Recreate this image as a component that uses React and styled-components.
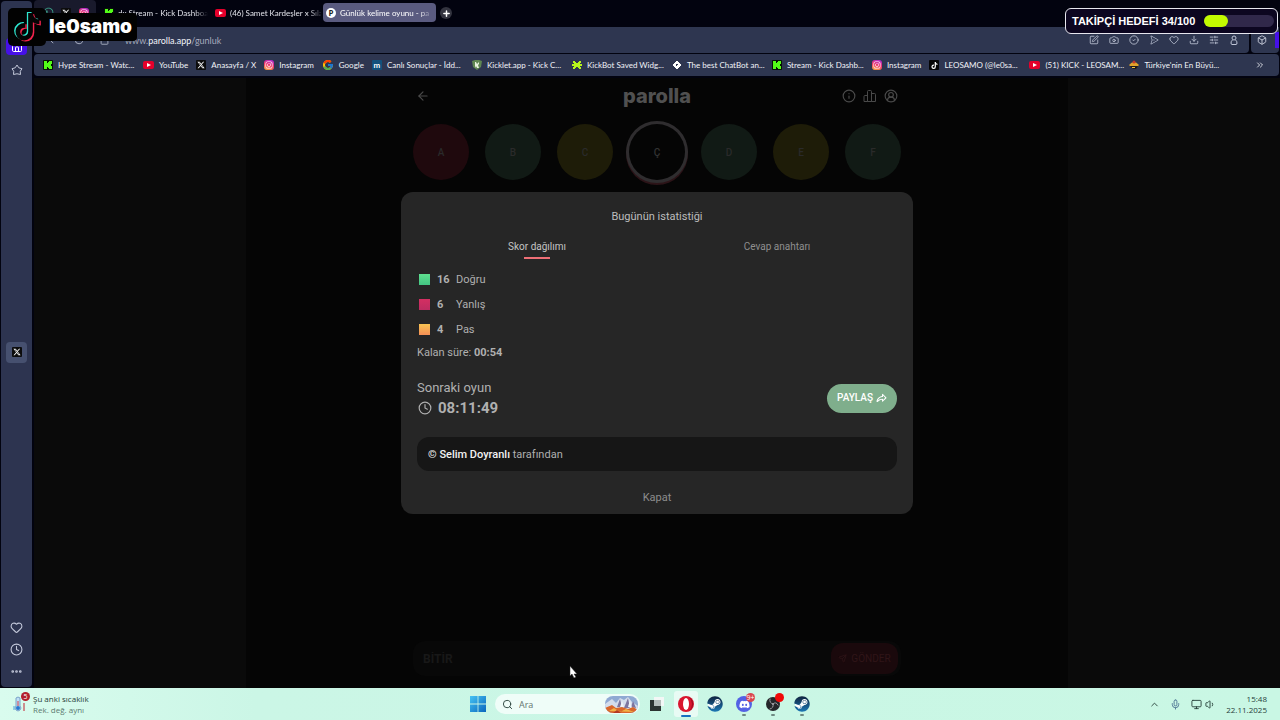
import React, { useState } from 'react';
import styled, { createGlobalStyle, css } from 'styled-components';
import {
  ArrowLeft,
  Box,
  Camera,
  ChevronUp,
  ChevronsRight,
  CircleCheck,
  CircleUserRound,
  Clock,
  Download,
  Ellipsis,
  Heart,
  House,
  Info,
  Lock,
  Mic,
  Monitor,
  Plus,
  RotateCw,
  Search,
  Send,
  SlidersHorizontal,
  SquarePen,
  Volume1,
} from 'lucide-react';
import { FaDiscord, FaInstagram, FaSteam, FaTiktok, FaWhatsapp, FaXTwitter } from 'react-icons/fa6';
import { FcGoogle } from 'react-icons/fc';
import { PiPaperPlaneRight, PiShareFatBold } from 'react-icons/pi';

const uiFont = 'Lato, "Noto Sans", sans-serif';
const taskbarFont = '"Open Sans", "Noto Sans", sans-serif';
const gameFont = 'Roboto, "Noto Sans", sans-serif';

const GlobalStyle = createGlobalStyle`
  * {
    box-sizing: border-box;
  }
  body {
    margin: 0;
    background: #02030f;
    font-family: ${uiFont};
    overflow: hidden;
  }
  button, input {
    font: inherit;
    color: inherit;
    border: 0;
    padding: 0;
    background: none;
  }
  a {
    color: inherit;
    text-decoration: none;
  }
  svg {
    display: block;
    flex-shrink: 0;
  }
`;

const Desktop = styled.div`
  position: relative;
  height: 100vh;
  display: flex;
  flex-direction: column;
`;

const Browser = styled.div`
  flex: 1;
  min-height: 0;
  display: flex;
  gap: 2px;
  padding-left: 1px;
`;

const Sidebar = styled.aside`
  width: 31px;
  margin: 1px 0;
  padding: 25px 0 9px;
  border-radius: 4px;
  background: #2d3450;
  color: #c3c8da;
  display: grid;
  grid-template-rows: 1fr auto 1fr;
  justify-items: center;
`;

const SidebarGroup = styled.div`
  display: flex;
  flex-direction: column;
  align-items: center;
  gap: 8px;
  ${(p) => (p.$end ? css`justify-content: flex-end;` : css`padding-top: 12px;`)}
`;

const SidebarButton = styled.button`
  display: grid;
  place-items: center;
  width: 21px;
  height: ${(p) => (p.$tall ? 21 : 14)}px;
  border-radius: 4px;
  ${(p) => p.$active && css`
    height: 17px;
    background: #4610e8;
    color: #fff;
  `}
  ${(p) => p.$tall && css`background: #46506f;`}
`;

const Main = styled.div`
  flex: 1;
  min-width: 0;
  display: flex;
  flex-direction: column;
`;

const TabStrip = styled.nav`
  height: 27px;
  display: flex;
  align-items: flex-start;
  gap: 2px;
`;

const PinnedTabs = styled.div`
  display: flex;
  align-items: center;
  justify-content: space-around;
  width: 62px;
  height: 25px;
  margin-right: 3px;
  padding: 0 3px 0 5px;
  border-radius: 4px;
  background: #191a2c;
`;

const Tab = styled.button`
  display: flex;
  align-items: center;
  gap: 4px;
  width: ${(p) => (p.$active ? 113 : 109)}px;
  height: 19px;
  margin-top: 3px;
  padding: 0 3px;
  border-radius: 4px;
  overflow: hidden;
  font-size: 8px;
  color: #e2e3ea;
  ${(p) => p.$active && css`
    background: #5a5b80;
    color: #fff;
  `}
`;

const TabTitle = styled.span`
  flex: 1;
  text-align: left;
  white-space: nowrap;
  mask-image: linear-gradient(90deg, #000 85%, transparent);
`;

const ParollaMark = styled.span`
  display: grid;
  place-items: center;
  flex-shrink: 0;
  width: 10px;
  height: 10px;
  border-radius: 50%;
  background: #fff;
  color: #222;
  font-size: 7px;
  font-weight: 800;
`;

const NewTab = styled.button`
  display: grid;
  place-items: center;
  width: 12px;
  height: 12px;
  margin: 7px 0 0 2px;
  border-radius: 50%;
  background: #33343f;
  color: #fff;
`;

const AddressRow = styled.div`
  display: flex;
  gap: 2px;
  height: 26px;
  padding-right: 1px;
`;

const AddressBar = styled.div`
  flex: 1;
  display: flex;
  align-items: center;
  gap: 16px;
  padding: 0 10px 0 14px;
  border-radius: 0 0 4px 4px;
  background: #2e3650;
  color: #bfc5d6;
`;

const Address = styled.span`
  flex: 1;
  font-size: 9px;
  color: #a5abbd;

  b {
    font-weight: 400;
    color: #f2f3f8;
  }
`;

const ToolButtons = styled.div`
  display: flex;
  gap: 10px;
`;

const IconButton = styled.button`
  display: grid;
  place-items: center;
  min-width: 10px;
`;

const ExtensionPanel = styled.div`
  display: flex;
  align-items: center;
  justify-content: space-between;
  width: 28px;
  padding-left: 6px;
  border-radius: 0 0 4px 4px;
  background: #2e3650;
  color: #d5d9e6;

  &::after {
    content: '';
    width: 4px;
    height: 16px;
    background: #4610e8;
  }
`;

const Bookmarks = styled.nav`
  display: flex;
  align-items: center;
  gap: 8px;
  height: 22px;
  margin: 1px 1px 2px 0;
  padding: 0 14px 0 9px;
  border-radius: 4px;
  background: #2e3650;
  color: #f2f3f8;
`;

const BookmarkLink = styled.a`
  display: flex;
  align-items: center;
  gap: 5px;
  flex-shrink: 0;
  font-size: 8px;
  line-height: 12px;
  white-space: nowrap;
  ${(p) => p.$long && css`width: 92px;`}
`;

const MoreButton = styled(IconButton)`
  margin-left: auto;
`;

const LogoTile = styled.span`
  display: grid;
  place-items: center;
  flex-shrink: 0;
  width: 10px;
  height: 10px;
  border-radius: ${(p) => (p.$round ? '3px' : '1px')};
  background: ${(p) => p.$bg};
  color: #fff;
  font-size: 8px;
  font-weight: 700;
  line-height: 10px;
`;

const Page = styled.main`
  position: relative;
  flex: 1;
  min-height: 0;
  display: flex;
  justify-content: center;
  background: #0a0a0a;
  font-family: ${gameFont};
`;

const GameArea = styled.div`
  display: flex;
  justify-content: center;
  width: 66%;
  background: #050505;
`;

const Game = styled.div`
  display: flex;
  flex-direction: column;
  width: 512px;
  padding: 6px 12px 12px;
`;

const GameHeader = styled.header`
  display: grid;
  grid-template-columns: 1fr auto 1fr;
  align-items: center;
  height: 24px;
  padding: 0 3px;
  color: #4a4a4a;
`;

const GameTitle = styled.h1`
  margin: 0;
  font-family: Inter, sans-serif;
  font-size: 20px;
  line-height: 20px;
  font-weight: 800;
  color: #505050;
`;

const HeaderActions = styled.div`
  display: flex;
  justify-content: flex-end;
  gap: 7px;
`;

const BackButton = styled(IconButton)`
  justify-self: start;
`;

const Letters = styled.div`
  display: flex;
  justify-content: space-between;
  margin-top: 16px;
`;

const letterColors = {
  wrong: '#1f090d',
  right: '#111a15',
  pass: '#1e1c08',
  current: '#050505',
};

const Letter = styled.span`
  display: grid;
  place-items: center;
  width: 56px;
  height: 56px;
  border-radius: 50%;
  background: ${(p) => letterColors[p.$state]};
  color: ${(p) => (p.$state === 'current' ? '#333' : '#2a2a2a')};
  font-size: 10px;
  font-weight: 500;
  ${(p) => p.$state === 'current' && css`
    box-shadow: 0 0 0 3px #2f2d2f, 0 2px 0 3px #2c1418;
  `}
`;

const AnswerBar = styled.form`
  display: flex;
  align-items: center;
  height: 35px;
  margin-top: auto;
  border-radius: 12px;
  background: #080808;
`;

const AnswerInput = styled.input`
  flex: 1;
  min-width: 0;
  padding: 0 10px;
  font-size: 12px;
  font-weight: 700;
  color: #181818;
  outline: none;
`;

const SendButton = styled.button`
  display: flex;
  align-items: center;
  justify-content: center;
  gap: 4px;
  width: 67px;
  height: 31px;
  margin-right: 3px;
  border-radius: 12px;
  background: #1a090c;
  color: #301518;
  font-size: 10px;
`;

const Overlay = styled.div`
  position: absolute;
  inset: 0;
  display: flex;
  justify-content: center;
  align-items: flex-start;
  padding-top: 114px;
`;

const Modal = styled.section`
  display: flex;
  flex-direction: column;
  width: 512px;
  padding: 17px 16px 4px;
  border-radius: 12px;
  background: #262626;
  color: #b0b0b0;
  font-size: 11px;
  line-height: 16px;
`;

const ModalTitle = styled.h2`
  margin: 0;
  text-align: center;
  font-size: 11px;
  font-weight: 400;
  color: #bdbdbd;
`;

const ModalTabs = styled.div`
  display: grid;
  grid-template-columns: 1fr 1fr;
  margin-top: 14px;
`;

const ModalTab = styled.button`
  display: flex;
  flex-direction: column;
  align-items: center;
  gap: 2px;
  height: 22px;
  font-size: 10px;
  color: ${(p) => (p.$active ? '#c4c4c4' : '#8f8f8f')};

  &::after {
    content: '';
    width: 26px;
    height: 2px;
    background: ${(p) => (p.$active ? '#ee6f76' : 'transparent')};
  }
`;

const ScoreList = styled.ul`
  margin: 6px 0 3px;
  padding: 0 0 0 2px;
  list-style: none;
`;

const ScoreRow = styled.li`
  display: grid;
  grid-template-columns: 18px 19px auto;
  align-items: center;
  height: 25px;

  &::before {
    content: '';
    width: 11px;
    height: 11px;
    background: ${(p) => p.$fill};
  }
`;

const NextGame = styled.div`
  display: flex;
  align-items: center;
  justify-content: space-between;
  margin-top: 19px;
`;

const NextLabel = styled.div`
  font-size: 13px;
`;

const Countdown = styled.div`
  display: flex;
  align-items: center;
  gap: 6px;
  margin-top: 4px;
  padding-left: 1px;
  font-size: 15px;
  font-weight: 700;
`;

const ShareButton = styled.button`
  display: flex;
  align-items: center;
  justify-content: center;
  gap: 3px;
  width: 70px;
  height: 29px;
  border-radius: 15px;
  background: #7fae8c;
  color: #fff;
  font-size: 10px;
  font-weight: 500;
`;

const Credit = styled.p`
  margin: 21px 0 14px;
  padding: 10px 11px 8px;
  border-radius: 12px;
  background: #161616;

  a {
    color: #f2f2f2;
    font-weight: 500;
  }
`;

const CloseButton = styled.button`
  height: 25px;
  color: #8d8d8d;
`;

const Taskbar = styled.footer`
  display: grid;
  grid-template-columns: 1fr auto 1fr;
  align-items: center;
  height: 32px;
  padding: 0 13px;
  background: linear-gradient(90deg, #d9fcee, #cbf6e6 20%, #c9f7e4);
  color: #27413a;
  font-family: ${taskbarFont};
`;

const Weather = styled.div`
  position: relative;
  display: flex;
  align-items: center;
  gap: 5px;
  font-size: 8px;
  line-height: 11px;

  small {
    display: block;
    font-size: 8px;
    color: #5c7a70;
  }
`;

const TaskCenter = styled.div`
  display: flex;
  align-items: center;
  gap: 5px;
`;

const StartButton = styled(IconButton)`
  padding: 0 4px;
`;

const SearchBox = styled.label`
  display: flex;
  align-items: center;
  gap: 6px;
  width: 145px;
  height: 20px;
  padding: 0 2px 0 7px;
  border-radius: 10px;
  background: #effdf8;
  font-size: 9px;

  input {
    flex: 1;
    min-width: 0;
    outline: none;
  }
  input::placeholder {
    color: #64756f;
    opacity: 1;
  }
`;

const Apps = styled.div`
  display: flex;
  gap: 5px;
`;

const AppButton = styled.button`
  position: relative;
  display: grid;
  place-items: center;
  width: 24px;
  height: 26px;
  border-radius: 3px;
  background: ${(p) => (p.$active ? '#e8fbf4' : 'transparent')};

  &::after {
    content: '';
    position: absolute;
    bottom: ${(p) => (p.$active ? 0 : 1)}px;
    width: ${(p) => (p.$active ? 10 : 4)}px;
    height: 2px;
    border-radius: 1px;
    background: ${(p) => (p.$active ? '#1470c0' : p.$open ? '#6f8b83' : 'transparent')};
  }
`;

const Badge = styled.span`
  position: absolute;
  top: 2px;
  right: 1px;
  min-width: 9px;
  height: 9px;
  border-radius: 5px;
  background: ${(p) => p.$bg};
  color: #fff;
  font-size: 7px;
  line-height: 9px;
  text-align: center;
`;

const WeatherBadge = styled(Badge)`
  top: -1px;
  left: 8px;
  right: auto;
`;

const Tray = styled.div`
  display: flex;
  align-items: center;
  justify-content: flex-end;
  gap: 10px;
`;

const TrayGroup = styled.div`
  display: flex;
  gap: 3px;
`;

const TrayClock = styled.div`
  font-size: 8px;
  line-height: 11px;
  text-align: right;
`;

const StreamerTag = styled.div`
  position: absolute;
  top: 8px;
  left: 8px;
  display: flex;
  align-items: center;
`;

const StreamerLogo = styled.span`
  display: grid;
  place-items: center;
  width: 38px;
  height: 38px;
  border-radius: 5px;
  background: #020202;
`;

const StreamerName = styled.strong`
  height: 28px;
  padding: 0 5px 0 3px;
  border-radius: 0 4px 4px 0;
  background: #020202;
  color: #fff;
  font-family: Inter, sans-serif;
  font-size: 19px;
  font-weight: 900;
  line-height: 28px;
`;

const GoalBox = styled.div`
  position: absolute;
  top: 8px;
  right: 2px;
  display: flex;
  align-items: center;
  justify-content: space-between;
  width: 213px;
  height: 26px;
  padding: 0 3px 0 6px;
  border: 1px solid #e6e6ee;
  border-radius: 6px;
  background: #0c0620;
  color: #fff;
  font-family: "Liberation Sans", sans-serif;
  font-size: 11px;
  font-weight: 700;
  white-space: nowrap;
`;

const GoalTrack = styled.div`
  width: 70px;
  height: 12px;
  border-radius: 6px;
  background: #30284a;
`;

const GoalFill = styled.div`
  height: 12px;
  border-radius: 6px;
  background: #c3fb00;
`;

const Pointer = styled.svg`
  position: absolute;
  left: 569px;
  top: 665px;
`;

const KickIcon = () => (
  <LogoTile $bg="#071407">
    <svg width="8" height="8" viewBox="0 0 8 8" fill="#53fc18">
      <path d="M0 0h3v2h1V1h1V0h3v3H7v1H6h1v1h1v3H5V7H4V6H3v2H0z" />
    </svg>
  </LogoTile>
);

const YoutubeIcon = () => (
  <svg width="11" height="10" viewBox="0 0 11 10">
    <rect y="1" width="11" height="8" rx="2" fill="#e4002b" />
    <path d="M4 3l4 2-4 2z" fill="#fff" />
  </svg>
);

const InstagramIcon = () => (
  <LogoTile $round $bg="linear-gradient(20deg, #fdb43c, #f0316c 50%, #a42be0)">
    <FaInstagram size={8} />
  </LogoTile>
);

const XIcon = () => (
  <LogoTile $bg="#0c0c0c">
    <FaXTwitter size={8} />
  </LogoTile>
);

const TiktokIcon = () => (
  <LogoTile $bg="#050505">
    <FaTiktok size={7} />
  </LogoTile>
);

const MackolikIcon = () => <LogoTile $bg="#12517c">m</LogoTile>;

const KickletIcon = () => (
  <svg width="10" height="10" viewBox="0 0 10 10">
    <path d="M0 1l3-1h4l3 1-1 6-4 3-4-3z" fill="#5f8752" />
    <path d="M3 2h1l1 2 2-2v2L6 5l1 3H5L4 6 3 8z" fill="#e8f3df" />
  </svg>
);

const KickBotIcon = () => (
  <svg width="10" height="10" viewBox="0 0 10 10" fill="#b5f51c">
    <path d="M1 1h2v1h1v1h2V2h1V1h2v2H8v1h2v2H8v1h1v2H7V8H6V7H4v1H3v1H1V7h1V6H0V4h2V3H1z" />
  </svg>
);

const BotrixIcon = () => (
  <svg width="10" height="10" viewBox="0 0 10 10">
    <path d="M5 1l4 4-4 4-4-4z" fill="#fff" stroke="#fff" strokeLinejoin="round" />
    <path d="M4 4h2v1H5v1H4z" fill="#2e3650" />
  </svg>
);

const HaberIcon = () => (
  <svg width="10" height="10" viewBox="0 0 10 10">
    <path d="M0 5q5-6 10 0L9 6H1z" fill="#e2a32b" />
    <circle cx="5" cy="2" r="1.500" fill="#c5372b" />
    <path d="M1 6h8L7 9H4z" fill="#1f1a18" />
    <path d="M3 7h3v1H3z" fill="#f0c340" />
  </svg>
);

const StarIcon = () => (
  <svg width="12" height="12" viewBox="0 0 24 24" fill="none" stroke="currentColor" strokeWidth="2" strokeLinejoin="round">
    <path d="M12 2l3.500 5.500L22 9.500l-3.500 5 .500 6.500-7-1.500L5 21l.500-6.500-3.500-5 6.500-2z" />
  </svg>
);

const PersonIcon = () => (
  <svg width="10" height="10" viewBox="0 0 10 10" fill="none" stroke="currentColor">
    <circle cx="5" cy="3" r="2" />
    <path d="M3.500 5Q2 6 2 8q0 1.500 1 1.500h4q1 0 1-1.500 0-2-1.500-3" />
  </svg>
);

const BarsIcon = () => (
  <svg width="14" height="14" viewBox="0 0 14 14" fill="none" stroke="currentColor">
    <path d="M1 12.500v-5q0-1 1-1h2.500v6zM4.500 12.500v-10q0-1 1-1h2q1 0 1 1v10zM8.500 12.500v-8h3q1 0 1 1v7z" />
  </svg>
);

const tiktokPath =
  'M448 209.910a210.060 210.060 0 0 1-122.770-39.250V349.380A162.550 162.550 0 1 1 185 188.310V278.200a74.620 74.620 0 1 0 52.230 71.180V0h88a121.180 121.180 0 0 0 1.860 22.170A122.180 122.180 0 0 0 381 102.390a121.430 121.430 0 0 0 67 20.140Z';

const TiktokLogo = () => (
  <svg width="27" height="30" viewBox="-25 -20 500 560">
    <path d={tiktokPath} fill="#2ee6d0" transform="translate(-24 -18)" />
    <path d={tiktokPath} fill="#f5244e" transform="translate(26 20)" />
    <path d={tiktokPath} fill="#050505" />
  </svg>
);

const WindowsLogo = () => (
  <svg width="16" height="16" viewBox="0 0 16 16">
    <defs>
      <linearGradient id="win" x1="0" y1="0" x2="1" y2="1">
        <stop offset="0" stopColor="#45c3f3" />
        <stop offset="1" stopColor="#0a66bd" />
      </linearGradient>
    </defs>
    <path d="M0 0h7.600v7.600H0zM8.400 0H16v7.600H8.400zM0 8.400h7.600V16H0zM8.400 8.400H16V16H8.400z" fill="url(#win)" />
  </svg>
);

const SearchArt = () => (
  <svg width="33" height="17" viewBox="0 0 33 17">
    <clipPath id="art">
      <rect width="33" height="17" rx="8" />
    </clipPath>
    <g clipPath="url(#art)">
      <rect width="33" height="17" fill="#8fa9d2" />
      <path d="M0 8L7 3l4 4 4-5 4 2 4-3 4 5 6 4v6H0z" fill="#d4ddec" />
      <path d="M12 11l3-8 2 8zM19 12l4-10 2 10zM26 11l2-6 3 7z" fill="#7d759f" />
      <path d="M15 11l2-6 2 6zM23 11l2-7 2 8z" fill="#eef2f8" />
      <path d="M0 12l7-3 4 3 6-1 6 2 5-2 5 3v5H0z" fill="#d9672b" />
      <path d="M4 15l5-3 6 4 6-3 8 3z" fill="#f1b247" />
      <path d="M8 17l4-3 4 3z" fill="#b33a24" />
    </g>
  </svg>
);

const TaskViewIcon = () => (
  <svg width="14" height="14" viewBox="0 0 14 14">
    <rect y="3" width="11" height="11" fill="#2c3331" />
    <rect x="4" width="10" height="9" fill="#f3f7f6" />
    <rect x="4" y="3" width="7" height="6" fill="#b4bcba" />
  </svg>
);

const OperaLogo = () => (
  <svg width="16" height="16" viewBox="0 0 16 16">
    <circle cx="8" cy="8" r="8" fill="#d9162f" />
    <path d="M11 1a8 8 0 0 1 0 14q3-3 3-7t-3-7z" fill="#a20b21" />
    <ellipse cx="8" cy="8" rx="3" ry="6" fill="#fff" />
  </svg>
);

const SteamLogo = () => (
  <svg width="16" height="16" viewBox="0 0 16 16">
    <defs>
      <linearGradient id="steam" x1="0" y1="0" x2="0" y2="1">
        <stop offset="0" stopColor="#10233f" />
        <stop offset="1" stopColor="#1c78b5" />
      </linearGradient>
    </defs>
    <circle cx="8" cy="8" r="7" fill="#fff" />
    <FaSteam size={16} fill="url(#steam)" />
  </svg>
);

const DiscordLogo = () => (
  <svg width="17" height="17" viewBox="0 0 17 17">
    <circle cx="8" cy="8" r="8" fill="#5361e4" />
    <FaDiscord x="3" y="3" size={11} color="#fff" />
  </svg>
);

const ObsLogo = () => (
  <svg width="16" height="16" viewBox="0 0 16 16">
    <circle cx="8" cy="8" r="7" fill="#25262a" />
    <g fill="none" stroke="#9b9da2" strokeLinecap="round">
      <path d="M8 8Q4 7 5 3M8 8q3-3 5 1M8 8q1 4-3 5" />
    </g>
    <circle cx="8" cy="8" r="1" fill="#9b9da2" />
  </svg>
);

const Thermometer = () => (
  <svg width="15" height="18" viewBox="0 0 15 18">
    <path d="M3 3q2-2 4 0v8q2 2 0 4-2 2-4 0-2-2 0-4z" fill="#bfe0f5" stroke="#7aa3c8" />
    <path d="M4.500 6h1v5h-1z" fill="#d73b49" />
    <circle cx="5" cy="13" r="2" fill="#2878d0" />
    <path d="M11 8v8" stroke="#c22131" />
    <path d="M1 11v4" stroke="#4fa5da" />
  </svg>
);

const bookmarks = [
  { title: 'Hype Stream - Watc...', icon: <KickIcon />, long: true },
  { title: 'YouTube', icon: <YoutubeIcon /> },
  { title: 'Anasayfa / X', icon: <XIcon /> },
  { title: 'Instagram', icon: <InstagramIcon /> },
  { title: 'Google', icon: <FcGoogle size={12} /> },
  { title: 'Canlı Sonuçlar - İdd...', icon: <MackolikIcon />, long: true },
  { title: 'Kicklet.app - Kick C...', icon: <KickletIcon />, long: true },
  { title: 'KickBot Saved Widg...', icon: <KickBotIcon />, long: true },
  { title: 'The best ChatBot an...', icon: <BotrixIcon />, long: true },
  { title: 'Stream - Kick Dashb...', icon: <KickIcon />, long: true },
  { title: 'Instagram', icon: <InstagramIcon /> },
  { title: 'LEOSAMO (@le0sa...', icon: <TiktokIcon />, long: true },
  { title: '(51) KICK - LEOSAM...', icon: <YoutubeIcon />, long: true },
  { title: 'Türkiye\'nin En Büyü...', icon: <HaberIcon />, long: true },
];

const tools = [
  { label: 'Not', Icon: SquarePen },
  { label: 'Ekran görüntüsü', Icon: Camera },
  { label: 'Güvenlik', Icon: CircleCheck },
  { label: 'Gönder', Icon: PiPaperPlaneRight },
  { label: 'Favoriler', Icon: Heart },
  { label: 'İndirilenler', Icon: Download },
  { label: 'Ayarlar', Icon: SlidersHorizontal },
  { label: 'Profil', Icon: PersonIcon },
];

const letters = [
  { char: 'A', state: 'wrong' },
  { char: 'B', state: 'right' },
  { char: 'C', state: 'pass' },
  { char: 'Ç', state: 'current' },
  { char: 'D', state: 'right' },
  { char: 'E', state: 'pass' },
  { char: 'F', state: 'right' },
];

const scores = [
  { count: 16, label: 'Doğru', fill: 'linear-gradient(#5fe08f, #43c483)' },
  { count: 6, label: 'Yanlış', fill: 'linear-gradient(#d42f62, #bd2c61)' },
  { count: 4, label: 'Pas', fill: 'linear-gradient(#f7c352, #f58f56)' },
];

const BrowserSidebar = () => (
  <Sidebar>
    <SidebarGroup>
      <SidebarButton $active aria-label="Ana sayfa"><House size={12} strokeWidth={2} /></SidebarButton>
      <SidebarButton aria-label="Yıldızlı"><StarIcon /></SidebarButton>
    </SidebarGroup>
    <SidebarButton $tall aria-label="X"><XIcon /></SidebarButton>
    <SidebarGroup $end>
      <SidebarButton aria-label="Favoriler"><Heart size={13} strokeWidth={2} /></SidebarButton>
      <SidebarButton aria-label="Geçmiş"><Clock size={13} strokeWidth={2} /></SidebarButton>
      <SidebarButton aria-label="Diğer"><Ellipsis size={13} strokeWidth={3} /></SidebarButton>
    </SidebarGroup>
  </Sidebar>
);

const BrowserChrome = () => (
  <>
    <TabStrip>
      <PinnedTabs>
        <FaWhatsapp size={11} color="#3ca68b" />
        <XIcon />
        <InstagramIcon />
      </PinnedTabs>
      <Tab><KickIcon /><TabTitle>dx Stream - Kick Dashboa</TabTitle></Tab>
      <Tab><YoutubeIcon /><TabTitle>(46) Samet Kardeşler x Sıla</TabTitle></Tab>
      <Tab $active><ParollaMark>P</ParollaMark><TabTitle>Günlük kelime oyunu - pa</TabTitle></Tab>
      <NewTab aria-label="Yeni sekme"><Plus size={9} strokeWidth={4} /></NewTab>
    </TabStrip>
    <AddressRow>
      <AddressBar>
        <IconButton aria-label="Geri"><ArrowLeft size={10} /></IconButton>
        <IconButton aria-label="Yenile"><RotateCw size={10} /></IconButton>
        <Lock size={9} />
        <Address>www.<b>parolla.app</b>/gunluk</Address>
        <ToolButtons>
          {tools.map(({ label, Icon }) => (
            <IconButton key={label} aria-label={label}><Icon size={10} /></IconButton>
          ))}
        </ToolButtons>
      </AddressBar>
      <ExtensionPanel><Box size={10} /></ExtensionPanel>
    </AddressRow>
    <Bookmarks>
      {bookmarks.map((b, i) => (
        <BookmarkLink key={i} href="#" $long={b.long}>
          {b.icon}
          {b.title}
        </BookmarkLink>
      ))}
      <MoreButton aria-label="Daha fazla"><ChevronsRight size={10} /></MoreButton>
    </Bookmarks>
  </>
);

const StatsModal = () => {
  const [tab, setTab] = useState('score');

  return (
    <Overlay>
      <Modal role="dialog" aria-labelledby="stats-title">
        <ModalTitle id="stats-title">Bugünün istatistiği</ModalTitle>
        <ModalTabs role="tablist">
          <ModalTab role="tab" $active={tab === 'score'} onClick={() => setTab('score')}>
            Skor dağılımı
          </ModalTab>
          <ModalTab role="tab" $active={tab === 'answers'} onClick={() => setTab('answers')}>
            Cevap anahtarı
          </ModalTab>
        </ModalTabs>
        <ScoreList>
          {scores.map((s) => (
            <ScoreRow key={s.label} $fill={s.fill}>
              <b>{s.count}</b>
              <span>{s.label}</span>
            </ScoreRow>
          ))}
        </ScoreList>
        <div>Kalan süre: <b>00:54</b></div>
        <NextGame>
          <div>
            <NextLabel>Sonraki oyun</NextLabel>
            <Countdown><Clock size={14} strokeWidth={2} />08:11:49</Countdown>
          </div>
          <ShareButton>PAYLAŞ <PiShareFatBold size={11} /></ShareButton>
        </NextGame>
        <Credit><a href="#">© Selim Doyranlı</a> tarafından</Credit>
        <CloseButton>Kapat</CloseButton>
      </Modal>
    </Overlay>
  );
};

const GamePage = () => {
  const [answer, setAnswer] = useState('BİTİR');

  return (
    <Page>
      <GameArea>
        <Game>
          <GameHeader>
            <BackButton aria-label="Geri"><ArrowLeft size={14} /></BackButton>
            <GameTitle>parolla</GameTitle>
            <HeaderActions>
              <IconButton aria-label="Bilgi"><Info size={14} /></IconButton>
              <IconButton aria-label="İstatistik"><BarsIcon /></IconButton>
              <IconButton aria-label="Hesap"><CircleUserRound size={14} /></IconButton>
            </HeaderActions>
          </GameHeader>
          <Letters>
            {letters.map((l) => (
              <Letter key={l.char} $state={l.state}>{l.char}</Letter>
            ))}
          </Letters>
          <AnswerBar onSubmit={(e) => e.preventDefault()}>
            <AnswerInput aria-label="Cevap" value={answer} onChange={(e) => setAnswer(e.target.value)} />
            <SendButton><Send size={9} />GÖNDER</SendButton>
          </AnswerBar>
        </Game>
      </GameArea>
      <StatsModal />
    </Page>
  );
};

const WindowsTaskbar = () => (
  <Taskbar>
    <Weather>
      <Thermometer />
      <WeatherBadge $bg="#b3202c">5</WeatherBadge>
      <div>
        Şu anki sıcaklık
        <small>Rek. değ. aynı</small>
      </div>
    </Weather>
    <TaskCenter>
      <StartButton aria-label="Başlat"><WindowsLogo /></StartButton>
      <SearchBox>
        <Search size={11} strokeWidth={2} />
        <input type="text" aria-label="Ara" placeholder="Ara" />
        <SearchArt />
      </SearchBox>
      <Apps>
        <AppButton aria-label="Görev görünümü"><TaskViewIcon /></AppButton>
        <AppButton $active aria-label="Opera"><OperaLogo /></AppButton>
        <AppButton aria-label="Steam"><SteamLogo /></AppButton>
        <AppButton $open aria-label="Discord"><DiscordLogo /><Badge $bg="#d9464f">9+</Badge></AppButton>
        <AppButton $open aria-label="OBS Studio"><ObsLogo /><Badge $bg="#f00808" /></AppButton>
        <AppButton $open aria-label="Steam"><SteamLogo /></AppButton>
      </Apps>
    </TaskCenter>
    <Tray>
      <ChevronUp size={11} />
      <Mic size={11} color="#4c7393" />
      <TrayGroup>
        <Monitor size={11} />
        <Volume1 size={11} />
      </TrayGroup>
      <TrayClock>15:48<br />22.11.2025</TrayClock>
    </Tray>
  </Taskbar>
);

const followers = 34;
const followerGoal = 100;

const App = () => (
  <Desktop>
    <GlobalStyle />
    <Browser>
      <BrowserSidebar />
      <Main>
        <BrowserChrome />
        <GamePage />
      </Main>
    </Browser>
    <WindowsTaskbar />
    <StreamerTag>
      <StreamerLogo><TiktokLogo /></StreamerLogo>
      <StreamerName>le0samo</StreamerName>
    </StreamerTag>
    <GoalBox>
      TAKİPÇİ HEDEFİ {followers}/{followerGoal}
      <GoalTrack>
        <GoalFill style={{ width: `${(followers / followerGoal) * 100}%` }} />
      </GoalTrack>
    </GoalBox>
    <Pointer width="9" height="13" viewBox="0 0 9 13">
      <path d="M1 1v10l2-2 2 4 2-1-2-3h3z" fill="#fff" stroke="#222" strokeWidth="0.500" />
    </Pointer>
  </Desktop>
);

export default App;
